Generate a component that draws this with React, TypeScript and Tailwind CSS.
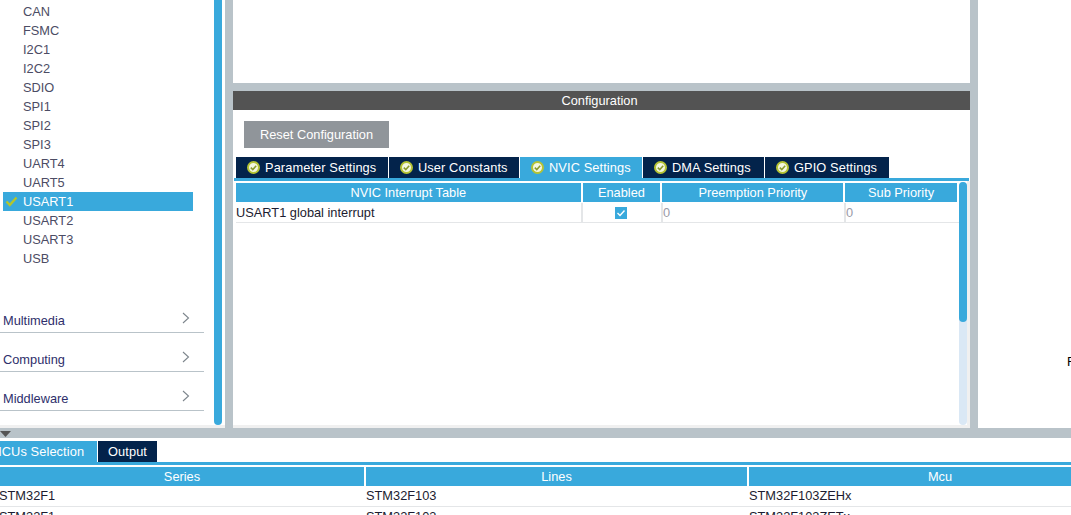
const PERIPHERALS = ["CAN", "FSMC", "I2C1", "I2C2", "SDIO", "SPI1", "SPI2", "SPI3", "UART4", "UART5", "USART1", "USART2", "USART3", "USB"];
const CATEGORIES = ["Multimedia", "Computing", "Middleware"];
const TABS = [
  { name: "Parameter Settings", width: "w-[152px]", active: false },
  { name: "User Constants", width: "w-[130px]", active: false },
  { name: "NVIC Settings", width: "w-[122px]", active: true },
  { name: "DMA Settings", width: "w-[121px]", active: false },
  { name: "GPIO Settings", width: "w-[124px]", active: false },
];
const COLUMNS = [
  { name: "NVIC Interrupt Table", width: "w-[345px]" },
  { name: "Enabled", width: "w-[78px]" },
  { name: "Preemption Priority", width: "w-[181px]" },
  { name: "Sub Priority", width: "w-[112px]" },
];
const MCU_ROWS = [
  ["STM32F1", "STM32F103", "STM32F103ZEHx"],
  ["STM32F1", "STM32F103", "STM32F103ZETx"],
];

function TabIcon() {
  return (
    <svg width="13" height="13" viewBox="0 0 13 13" className="shrink-0">
      <circle cx="6.5" cy="6.5" r="5.5" fill="#f4f7e0" stroke="#b5c334" strokeWidth="2" />
      <path d="M3.8 6.6 L5.8 8.6 L9.2 4.8" fill="none" stroke="#8a9a2a" strokeWidth="1.5" />
    </svg>
  );
}

function Chevron() {
  return (
    <svg width="8" height="12" viewBox="0 0 8 12" className="block">
      <path d="M1 1 L6.5 6 L1 11" fill="none" stroke="#7d858c" strokeWidth="1.1" />
    </svg>
  );
}

function Sidebar() {
  return (
    <div className="w-[225px] shrink-0 bg-[#f0f0f0] pb-[3px]">
      <div className="flex h-full bg-white">
        <div className="w-[214px] shrink-0">
          <div className="pl-[3px] pt-[2px]">
            {PERIPHERALS.map((name) => (
              <div
                key={name}
                className={`flex h-[19px] w-[190px] items-center ${name === "USART1" ? "bg-[#39a9dc] text-white" : "text-[#4c4c64]"}`}
              >
                <div className="flex w-[20px] pl-[2px]">
                  {name === "USART1" && (
                    <svg width="13" height="11" viewBox="0 0 13 11">
                      <path d="M1.5 5.5 L4.8 9 L11.5 1.5" fill="none" stroke="#b4c62b" strokeWidth="2.4" />
                    </svg>
                  )}
                </div>
                {name}
              </div>
            ))}
          </div>
          <div className="pt-[45px]">
            {CATEGORIES.map((name) => (
              <div
                key={name}
                className="mb-[19px] flex h-[20px] w-[204px] items-center justify-between border-b border-[#b9c3c9] pl-[3px] pr-[14px] text-[#2e2f6b]"
              >
                <span className="pb-[3px]">{name}</span>
                <span className="pb-[9px]">
                  <Chevron />
                </span>
              </div>
            ))}
          </div>
        </div>
        <div className="h-[425px] w-[8px] rounded-b-full bg-[#39a9dc]" />
      </div>
    </div>
  );
}

function ConfigPanel() {
  return (
    <div className="flex w-[737px] shrink-0 flex-col">
      <div className="h-[83px] shrink-0 bg-white" />
      <div className="h-[8px] shrink-0 bg-[#b9c3c9]" />
      <div className="flex h-[19px] shrink-0 items-center justify-center bg-[#535353] pr-[4px] text-white">Configuration</div>
      <div className="flex min-h-0 flex-1 flex-col bg-white">
        <div className="pl-[11px] pt-[11px]">
          <button className="h-[27px] w-[145px] bg-[#90959a] text-center text-white">
            Reset Configuration
          </button>
        </div>
        <div className="flex pl-[3px] pt-[9px]">
          {TABS.map((tab) => (
            <div
              key={tab.name}
              className={`mr-px flex h-[21px] items-center gap-[5px] pl-[11px] tracking-[0.1px] text-white ${tab.width} ${tab.active ? "bg-[#39a9dc]" : "bg-[#03234b]"}`}
            >
              <TabIcon />
              {tab.name}
            </div>
          ))}
        </div>
        <div className="ml-px h-[3px] w-[735px] bg-[#39a9dc]" />
        <div className="min-h-0 flex-1 bg-[#f0f0f0] pb-[3px] pr-[3px]">
          <div className="flex h-full bg-white">
            <div className="w-[726px] pl-[3px] pt-[2px]">
              <div className="flex">
                {COLUMNS.map((col) => (
                  <div
                    key={col.name}
                    className={`mr-[2px] flex h-[19px] items-center justify-center bg-[#39a9dc] text-white ${col.width}`}
                  >
                    {col.name}
                  </div>
                ))}
              </div>
              <div className="mt-px flex h-[20px] w-[723px] items-center border-b border-[#e4e6e8]">
                <div className="flex h-full w-[347px] items-center border-r-2 border-[#e4e6e8] text-[#1c1c30]">USART1 global interrupt</div>
                <div className="flex h-full w-[80px] items-center justify-center border-r-2 border-[#e4e6e8] pr-[2px]">
                  <div className="flex h-[12px] w-[12px] items-center justify-center bg-[#39a9dc]">
                    <svg width="10" height="10" viewBox="0 0 10 10">
                      <path d="M1.5 5 L4 7.5 L8.5 2.5" fill="none" stroke="white" strokeWidth="1.4" />
                    </svg>
                  </div>
                </div>
                <div className="flex h-full w-[183px] items-center border-r-2 border-[#e4e6e8] text-[#9a9aa8]">0</div>
                <div className="flex h-full flex-1 items-center text-[#9a9aa8]">0</div>
              </div>
            </div>
            <div className="mt-px h-[243px] w-[8px] rounded-full bg-[#dae8f5]">
              <div className="h-[140px] rounded-full bg-[#39a9dc]" />
            </div>
          </div>
        </div>
      </div>
    </div>
  );
}

function McuTable() {
  return (
    <div className="h-[77px] overflow-hidden bg-white">
      <div className="flex pt-[3px]">
        <div className="flex h-[21px] w-[97px] items-center overflow-hidden bg-[#39a9dc] tracking-[0.1px] text-white">
          <span className="-ml-[9px] whitespace-nowrap">MCUs Selection</span>
        </div>
        <div className="ml-px flex h-[21px] w-[59px] items-center justify-center bg-[#03234b] tracking-[0.1px] text-white">
          Output
        </div>
      </div>
      <div className="h-[3px] bg-[#39a9dc]" />
      <div className="mt-[2px] flex h-[19px] text-white">
        <div className="flex w-[364px] shrink-0 items-center justify-center bg-[#39a9dc]">Series</div>
        <div className="ml-[2px] flex w-[381px] shrink-0 items-center justify-center bg-[#39a9dc]">Lines</div>
        <div className="ml-[2px] flex w-[382px] shrink-0 items-center justify-center bg-[#39a9dc]">Mcu</div>
      </div>
      {MCU_ROWS.map((row, i) => (
        <div key={i} className="flex h-[21px] items-center border-b border-[#e4e6e8] text-[#1c1c30]">
          <div className="-ml-px w-[367px]">{row[0]}</div>
          <div className="w-[383px]">{row[1]}</div>
          <div>{row[2]}</div>
        </div>
      ))}
    </div>
  );
}

export default function App() {
  return (
    <div className="h-[515px] w-[1071px] overflow-hidden bg-white font-['Liberation_Sans',Arial,sans-serif] text-[12.8px]">
      <div className="flex h-[428px] bg-[#b9c3c9]">
        <Sidebar />
        <div className="w-[8px] shrink-0" />
        <ConfigPanel />
        <div className="w-[8px] shrink-0" />
        <div className="flex flex-1 items-end justify-end overflow-hidden bg-white pb-[57px]">
          <span className="-mr-[4px] w-[8px] text-black">F</span>
        </div>
      </div>
      <div className="h-[10px] bg-[#b9c3c9] pt-[3px]">
        <svg width="11" height="6" viewBox="0 0 11 6" className="block">
          <path d="M0 0 H11 L5.5 6 Z" fill="#555" />
        </svg>
      </div>
      <McuTable />
    </div>
  );
}
